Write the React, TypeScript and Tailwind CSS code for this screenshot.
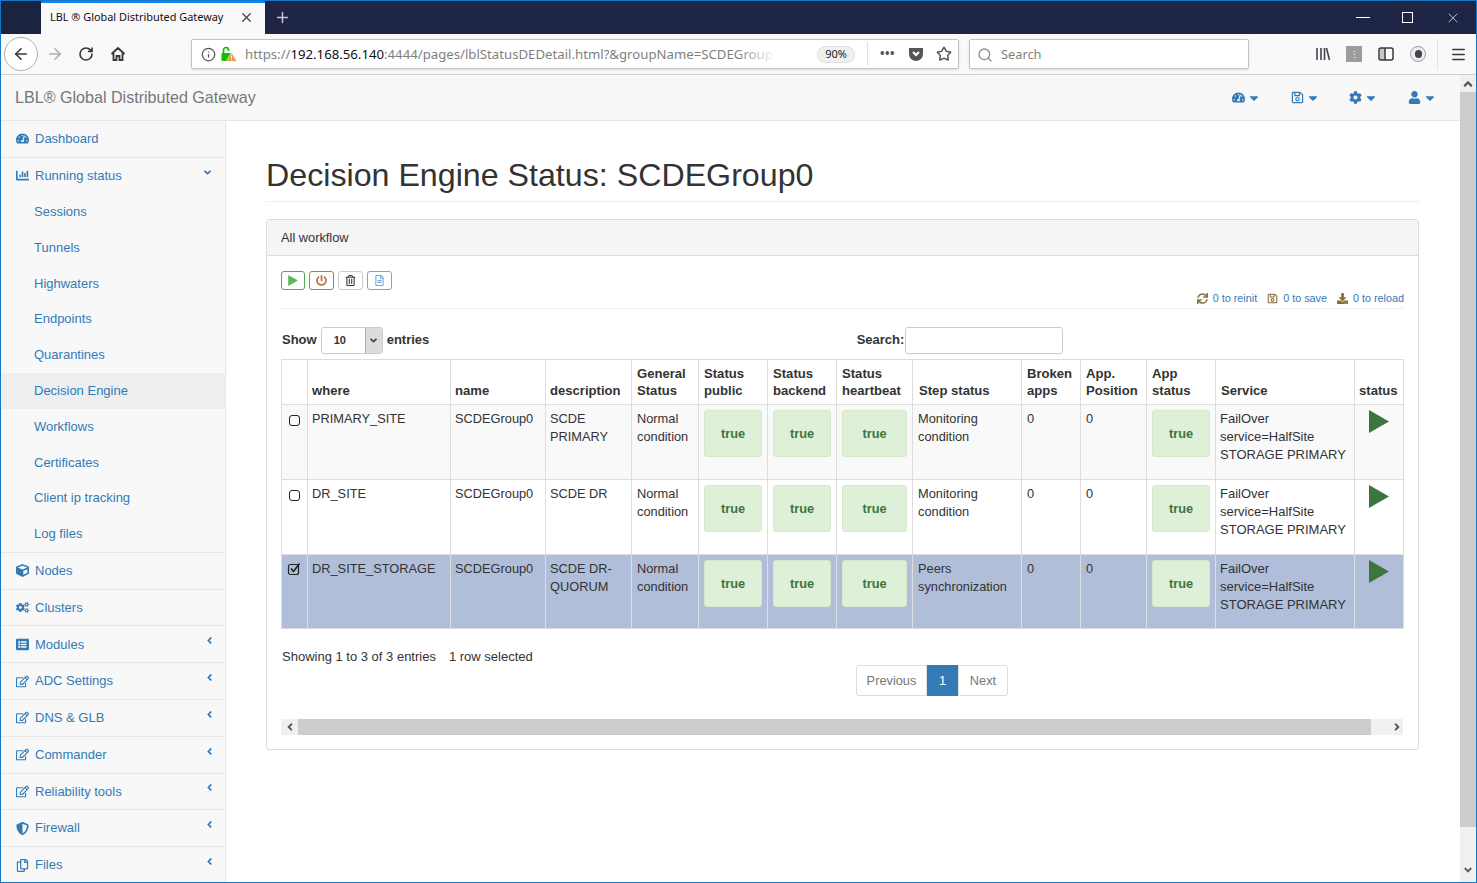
import type { ReactNode } from "react"
import { ArrowLeft, ArrowRight, Info, Menu, Plus, RotateCw, Search, Star, X } from "lucide-react"
import {
  FaAngleDown,
  FaAngleLeft,
  FaCaretDown,
  FaChartBar,
  FaCogs,
  FaCube,
  FaCog,
  FaDownload,
  FaListAlt,
  FaPowerOff,
  FaRegCopy,
  FaRegEdit,
  FaRegFileAlt,
  FaRegSave,
  FaRegTrashAlt,
  FaShieldAlt,
  FaSync,
  FaTachometerAlt,
  FaUser,
} from "react-icons/fa"

const subItems = [
  "Sessions",
  "Tunnels",
  "Highwaters",
  "Endpoints",
  "Quarantines",
  "Decision Engine",
  "Workflows",
  "Certificates",
  "Client ip tracking",
  "Log files",
]

const lowerItems = [
  { label: "Nodes", icon: <FaCube />, arrow: false },
  { label: "Clusters", icon: <FaCogs />, arrow: false },
  { label: "Modules", icon: <FaListAlt />, arrow: true },
  { label: "ADC Settings", icon: <FaRegEdit />, arrow: true },
  { label: "DNS & GLB", icon: <FaRegEdit />, arrow: true },
  { label: "Commander", icon: <FaRegEdit />, arrow: true },
  { label: "Reliability tools", icon: <FaRegEdit />, arrow: true },
  { label: "Firewall", icon: <FaShieldAlt />, arrow: true },
  { label: "Files", icon: <FaRegCopy />, arrow: true },
]

const rows = [
  {
    where: "PRIMARY_SITE",
    description: "SCDE PRIMARY",
    step: "Monitoring condition",
    rowClass: "h-[75px] bg-[#f9f9f9]",
    selected: false,
  },
  {
    where: "DR_SITE",
    description: "SCDE DR",
    step: "Monitoring condition",
    rowClass: "h-[75px] bg-white",
    selected: false,
  },
  {
    where: "DR_SITE_STORAGE",
    description: "SCDE DR-QUORUM",
    step: "Peers synchronization",
    rowClass: "h-[74px] bg-[#b0bed9]",
    selected: true,
  },
]

function TitleBar() {
  return (
    <div className="flex h-[33px] shrink-0 bg-[#1f2544]">
      <div className="w-10 bg-[#1a2440]" />
      <div className="flex w-[224px] items-center border-t-2 border-[#0a84ff] bg-[#f9f9fa] pb-[2px] pl-[9px] pr-[11px] font-['Noto_Sans',sans-serif] text-[10.9px] text-[#111]">
        <span className="whitespace-nowrap">LBL ® Global Distributed Gateway</span>
        <X className="ml-auto h-[15px] w-[15px] text-[#444]" />
      </div>
      <Plus className="ml-[9px] mt-2 h-[17px] w-[17px] text-[#c8c9d2]" />
      <div className="ml-auto flex items-center gap-[32px] pr-[15px] text-white">
        <div className="h-px w-[14px] bg-white" />
        <div className="h-[11px] w-[11px] border border-white" />
        <X className="h-[16px] w-[16px]" strokeWidth={1} />
      </div>
    </div>
  )
}

function LibraryIcon() {
  return (
    <svg viewBox="0 0 16 16" className="h-4 w-4" fill="none" stroke="#45454f" strokeWidth="1.6">
      <path d="M2 2v12M6 2v12M9.5 2v12M11.5 2l3 12" />
    </svg>
  )
}

function BrowserToolbar() {
  return (
    <div className="flex h-[41px] shrink-0 items-center border-b border-[#d0d0d2] bg-[#f9f9fa] font-['Noto_Sans',sans-serif]">
      <div className="ml-[3px] flex h-[34px] w-[34px] items-center justify-center rounded-full border border-[#b1b1b3] bg-white">
        <ArrowLeft className="h-[18px] w-[18px] text-[#38383d]" strokeWidth={2.2} />
      </div>
      <ArrowRight className="ml-[8px] h-[18px] w-[18px] text-[#acacae]" />
      <RotateCw className="ml-[14px] h-[16px] w-[16px] text-[#38383d]" strokeWidth={2.4} />
      <svg viewBox="0 0 16 16" className="ml-[16px] h-4 w-4" fill="none" stroke="#38383d" strokeWidth="1.8">
        <path d="M1.5 8 8 2l6.5 6M3.5 7v7h3v-4h3v4h3V7" />
      </svg>
      <div className="ml-[65px] flex h-[30px] w-[768px] items-center rounded-[2px] border border-[#c4c4c6] bg-white shadow-sm">
        <Info className="ml-[9px] h-[15px] w-[15px] text-[#55555a]" />
        <svg viewBox="0 0 16 16" className="ml-[5px] h-4 w-4">
          <rect x="0.5" y="7" width="9" height="8" rx="1" fill="#12bc00" />
          <path d="M2.500 7V4a2.500 2.500 0 0 1 5 0v1" fill="none" stroke="#12bc00" strokeWidth="1.700" />
          <path d="M10.500 6.500 16 15.500H5z" fill="#e0a050" stroke="#fff" strokeWidth="0.600" />
          <path d="M10.500 9.500v3M10.500 13.500v1" stroke="#fff" strokeWidth="1" />
        </svg>
        <div className="relative ml-[8px] w-[532px] whitespace-nowrap pt-px text-[13.2px] text-[#7f7f80]">
          https://<span className="text-[#111]">192.168.56.140</span>:4444/pages/lblStatusDEDetail.html?&amp;groupName=SCDEGroup
          <div className="absolute inset-y-0 right-0 w-10 bg-gradient-to-r from-transparent to-white" />
        </div>
        <span className="ml-[40px] flex h-[17px] w-[38px] items-center justify-center rounded-full border border-[#e0e0e1] bg-[#f0f0f1] text-[11px] text-[#222]">
          90%
        </span>
        <div className="ml-[12px] h-[24px] w-px bg-[#e0e0e1]" />
        <span className="ml-[12px] w-[16px] text-[12px] font-bold leading-none tracking-[0.5px] text-[#55555a]">•••</span>
        <svg viewBox="0 0 16 16" className="ml-[12px] h-4 w-4">
          <path d="M1 2h14v6a7 7 0 0 1-14 0z" fill="#55555a" />
          <path d="M5 6l3 3 3-3" fill="none" stroke="#fff" strokeWidth="2" />
        </svg>
        <Star className="ml-[12px] h-[16px] w-[16px] text-[#55555a]" strokeWidth={2.2} />
      </div>
      <div className="ml-[10px] flex h-[30px] w-[280px] items-center rounded-[2px] border border-[#c4c4c6] bg-white pt-px text-[12.8px] text-[#7f7f80] shadow-sm">
        <Search className="ml-[7px] mr-[8px] h-[16px] w-[16px] text-[#8d8d92]" />
        Search
      </div>
      <div className="ml-[66px]">
        <LibraryIcon />
      </div>
      <div className="ml-[15px] flex h-4 w-4 items-center justify-center bg-[#9d9d9d] text-[9px] leading-none text-white">⋮</div>
      <svg viewBox="0 0 16 16" className="ml-[16px] h-4 w-4" fill="none" stroke="#38383d" strokeWidth="1.500">
        <rect x="1" y="2" width="14" height="12" rx="2" />
        <path d="M7 2v12" />
        <path d="M2 2h5v12H2z" fill="#38383d" fillOpacity="0.25" stroke="none" />
      </svg>
      <div className="ml-[16px] flex h-4 w-4 items-center justify-center rounded-full border border-[#9d9d9d] bg-[#eee]">
        <div className="h-2 w-[7px] rounded-full bg-[#3d4554]" />
      </div>
      <div className="ml-[11px] h-[31px] w-px bg-[#e2e2e3]" />
      <Menu className="ml-[12px] h-[17px] w-[17px] text-[#38383d]" strokeWidth={2.2} />
    </div>
  )
}

function NavMenu({ icon }: { icon: ReactNode }) {
  return (
    <span className="flex items-center gap-[2px] text-[13px] text-[#337ab7]">
      {icon}
      <FaCaretDown className="text-[14px]" />
    </span>
  )
}

function TopNav() {
  return (
    <div className="flex h-[46px] shrink-0 items-center border-b border-[#e7e7e7] bg-[#f8f8f8] pl-[14px] pr-[23px]">
      <span className="whitespace-nowrap text-[16.1px] text-[#777]">LBL® Global Distributed Gateway</span>
      <div className="ml-auto flex items-center gap-[29.700px]">
        <NavMenu icon={<FaTachometerAlt />} />
        <NavMenu icon={<FaRegSave />} />
        <NavMenu icon={<FaCog />} />
        <NavMenu icon={<FaUser />} />
      </div>
    </div>
  )
}

function SideRow({ icon, label, arrow, last }: { icon: ReactNode; label: string; arrow?: ReactNode; last?: boolean }) {
  return (
    <div className={`flex items-center pl-[14px] pr-[10px] text-[#337ab7] ${last ? "h-[36px]" : "h-[36.8px] border-b border-[#e7e7e7]"}`}>
      <span className="flex w-[20px] justify-start pl-px text-[13px]">{icon}</span>
      <span>{label}</span>
      {arrow && <span className="mb-[7px] ml-auto text-[11px]">{arrow}</span>}
    </div>
  )
}

function Sidebar() {
  return (
    <div className="w-[225px] shrink-0 border-r border-[#e7e7e7] bg-[#f8f8f8] text-[13px]">
      <SideRow icon={<FaTachometerAlt />} label="Dashboard" />
      <div className="border-b border-[#e7e7e7]">
        <div className="pr-[2px]">
          <SideRow icon={<FaChartBar />} label="Running status" arrow={<FaAngleDown />} last />
        </div>
        {subItems.map((item) => (
          <div
            key={item}
            className={`flex h-[35.8px] items-center pl-[33px] text-[#337ab7] ${item === "Decision Engine" ? "bg-[#eeeeee]" : ""}`}
          >
            {item}
          </div>
        ))}
      </div>
      {lowerItems.map((item, i) => (
        <SideRow
          key={item.label}
          icon={item.icon}
          label={item.label}
          arrow={item.arrow ? <FaAngleLeft /> : undefined}
          last={i === lowerItems.length - 1}
        />
      ))}
    </div>
  )
}

function ToolButton({ className, children }: { className: string; children: ReactNode }) {
  return (
    <span className={`flex h-[19px] items-center justify-center rounded-[3px] border bg-white text-[11px] ${className}`}>
      {children}
    </span>
  )
}

function Counter({ icon, label }: { icon: ReactNode; label: string }) {
  return (
    <span className="flex items-center gap-[5px]">
      <span className="text-[11px] text-[#8a6d3b]">{icon}</span>
      <span className="text-[#337ab7]">{label}</span>
    </span>
  )
}

function TrueBox() {
  return (
    <div className="flex h-[47px] items-center justify-center rounded-[3px] border border-[#d6e9c6] bg-[#dff0d8] font-bold text-[#3c763d]">
      true
    </div>
  )
}

function PlayMark({ className }: { className: string }) {
  return (
    <svg viewBox="0 0 20 23" className={className}>
      <path d="M0 0 20 11.500 0 23z" fill="currentColor" />
    </svg>
  )
}

const headers = [
  { label: "", cls: "w-[26px] pl-[5px]" },
  { label: "where", cls: "w-[143px] pl-[4px]" },
  { label: "name", cls: "w-[95px] pl-[4px]" },
  { label: "description", cls: "w-[86px] pl-[4px]" },
  { label: "General Status", cls: "w-[67px] pl-[5px]" },
  { label: "Status public", cls: "w-[69px] pl-[5px]" },
  { label: "Status backend", cls: "w-[69px] pl-[5px]" },
  { label: "Status heartbeat", cls: "w-[76px] pl-[5px]" },
  { label: "Step status", cls: "w-[109px] pl-[6px]" },
  { label: "Broken apps", cls: "w-[59px] pl-[5px]" },
  { label: "App. Position", cls: "w-[66px] pl-[5px]" },
  { label: "App status", cls: "w-[69px] pl-[5px]" },
  { label: "Service", cls: "w-[139px] pl-[5px]" },
  { label: "status", cls: "w-[49px] pl-[4px]" },
]

const td = "border border-[#ddd] px-[5px] pt-[5px] align-top"
const tdTight = "border border-[#ddd] pl-[4px] pr-[5px] pt-[5px] align-top"

function WorkflowTable() {
  return (
    <table className="w-[1122px] table-fixed border-collapse text-[12.8px] leading-[18px] text-[#333]">
      <thead>
        <tr className="h-[45px]">
          {headers.map((h) => (
            <th key={h.label} className={`${h.cls} border border-[#ddd] pb-[5px] pr-0 text-left align-bottom text-[13.1px] font-bold leading-[17px]`}>
              {h.label}
            </th>
          ))}
        </tr>
      </thead>
      <tbody>
        {rows.map((row) => (
          <tr key={row.where} className={row.rowClass}>
            <td className={td}>
              {row.selected ? (
                <svg viewBox="0 0 14 14" className="mt-[2px] h-[14px] w-[14px]" fill="none" stroke="#222">
                  <rect x="1.500" y="2.500" width="10" height="10" rx="2" strokeWidth="1.200" />
                  <path d="M4 6.500 6.500 9.500 12.500 1.500" strokeWidth="1.700" />
                </svg>
              ) : (
                <div className="ml-[2px] mt-[5px] h-[11px] w-[11px] rounded-[3px] border-[1.5px] border-[#222]" />
              )}
            </td>
            <td className={tdTight}>{row.where}</td>
            <td className={tdTight}>SCDEGroup0</td>
            <td className={tdTight}>{row.description}</td>
            <td className={td}>Normal condition</td>
            <td className={td}><TrueBox /></td>
            <td className={td}><TrueBox /></td>
            <td className={td}><TrueBox /></td>
            <td className={td}>{row.step}</td>
            <td className={td}>0</td>
            <td className={td}>0</td>
            <td className={td}><TrueBox /></td>
            <td className={`${tdTight} text-[13px]`}>FailOver service=HalfSite STORAGE PRIMARY</td>
            <td className={td}>
              <PlayMark className="ml-[9px] h-[23px] w-[20px] text-[#3c763d]" />
            </td>
          </tr>
        ))}
      </tbody>
    </table>
  )
}

function Panel() {
  return (
    <div className="mt-[17px] h-[531px] rounded-[3px] border border-[#ddd] bg-white">
      <div className="flex h-[36px] items-center border-b border-[#ddd] bg-[#f5f5f5] px-[14px] text-[12.8px] text-[#333]">
        All workflow
      </div>
      <div className="px-[14px]">
        <div className="flex gap-[4px] pt-[15px]">
          <ToolButton className="w-[24px] border-[#4cae4c] text-[#5cb85c]"><PlayMark className="h-[11px] w-[10px]" /></ToolButton>
          <ToolButton className="w-[25px] border-[#b8764a] text-[#b8764a]"><FaPowerOff /></ToolButton>
          <ToolButton className="w-[25px] border-[#ccc] text-[#333]"><FaRegTrashAlt /></ToolButton>
          <ToolButton className="w-[25px] border-[#6da9dc] text-[#6da9dc]"><FaRegFileAlt /></ToolButton>
        </div>
        <div className="flex h-[19px] items-end justify-end gap-[10px] border-b border-[#eee] pb-[4px] text-[10.8px] leading-[12px]">
          <Counter icon={<FaSync />} label="0 to reinit" />
          <Counter icon={<FaRegSave />} label="0 to save" />
          <Counter icon={<FaDownload />} label="0 to reload" />
        </div>
        <div className="mt-[17px] flex h-[28px] items-center pl-px text-[13px] font-bold text-[#333]">
          <span>Show</span>
          <span className="ml-[4px] flex h-[27px] w-[62px] items-center overflow-hidden rounded-[3px] border border-[#ccc] bg-white text-[11px]">
            <span className="flex-1 pl-[12px]">10</span>
            <span className="flex h-full w-[17px] items-center justify-center border-l border-[#aaa] bg-[#dcdcdc] text-[#444]">
              <FaAngleDown className="text-[11px]" />
            </span>
          </span>
          <span className="ml-[4px] w-[470px]">entries</span>
          <span>Search:</span>
          <span className="ml-px h-[27px] w-[158px] rounded-[3px] border border-[#ccc] bg-white" />
        </div>
        <div className="mt-[5px]">
          <WorkflowTable />
        </div>
        <div className="mt-[19px] flex h-[17px] items-center text-[13px] text-[#333]">
          <span className="ml-px">Showing 1 to 3 of 3 entries</span>
          <span className="ml-[13px]">1 row selected</span>
        </div>
        <div className="ml-[575px] flex h-[31px] w-[152px] text-[12.8px] text-[#777]">
          <span className="flex w-[71px] items-center justify-center rounded-l-[3px] border border-[#ddd] bg-white">Previous</span>
          <span className="flex w-[31px] items-center justify-center bg-[#337ab7] text-white">1</span>
          <span className="flex w-[50px] items-center justify-center rounded-r-[3px] border border-[#ddd] bg-white">Next</span>
        </div>
        <div className="mt-[23px] flex h-[16px] w-[1122px] items-stretch bg-[#f0f0f0] text-[#555]">
          <span className="flex w-[17px] items-center justify-center text-[12px]"><FaAngleLeft /></span>
          <span className="w-[1073px] bg-[#cdcdcd]" />
          <span className="flex w-[32px] items-center justify-end text-[12px]"><FaAngleLeft className="rotate-180" /></span>
        </div>
      </div>
    </div>
  )
}

function PageScrollbar() {
  return (
    <div className="flex w-[16px] shrink-0 flex-col items-center bg-[#f0f0f0] text-[12px] text-[#555]">
      <FaAngleDown className="mt-[2px] h-[14px] rotate-180" />
      <div className="mt-[1px] h-[735px] w-full bg-[#cdcdcd]" />
      <FaAngleDown className="mt-[37px]" />
    </div>
  )
}

export default function App() {
  return (
    <div className="flex h-[883px] w-[1477px] flex-col overflow-hidden border border-[#1478c8] font-['Liberation_Sans',Arial,sans-serif]">
      <TitleBar />
      <BrowserToolbar />
      <div className="flex min-h-0 flex-1">
        <div className="flex min-w-0 flex-1 flex-col">
          <TopNav />
          <div className="flex min-h-0 flex-1">
            <Sidebar />
            <div className="flex-1 bg-white pl-[40px] pr-[41px]">
              <h1 className="mt-[33px] h-[48px] border-b border-[#eee] text-[32.2px] leading-[42px] text-[#333]">
                Decision Engine Status: SCDEGroup0
              </h1>
              <Panel />
            </div>
          </div>
        </div>
        <PageScrollbar />
      </div>
    </div>
  )
}
